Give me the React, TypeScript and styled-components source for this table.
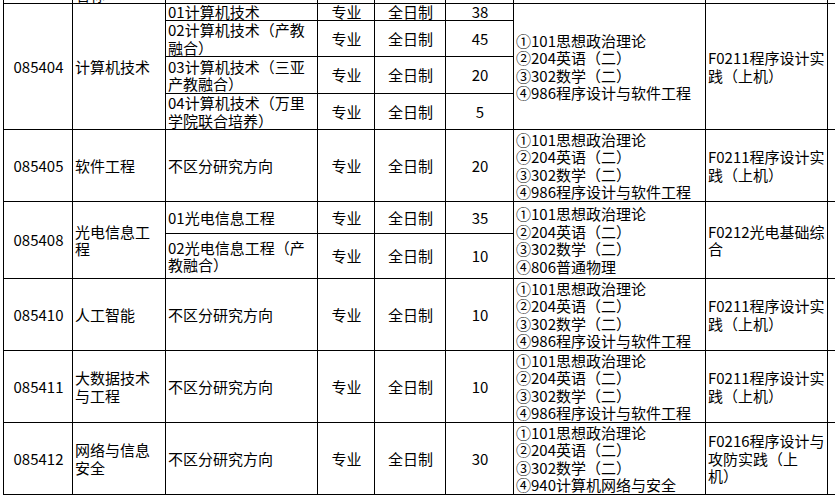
import React from 'react'
import styled, { createGlobalStyle } from 'styled-components'

const GlobalStyle = createGlobalStyle`
  html, body {
    margin: 0;
    padding: 0;
    background: #ffffff;
  }
  body {
    font-family: "Noto Sans CJK SC", "Liberation Sans", sans-serif;
    color: #000;
  }
`

const Viewport = styled.div`
  width: 835px;
  height: 496px;
  overflow: hidden;
  padding-left: 3px;
  box-sizing: border-box;
`

const Sheet = styled.table`
  border-collapse: collapse;
  table-layout: fixed;
  width: 894px;
  margin-top: -33px;
  font-size: 15px;
  line-height: 17.5px;
  text-spacing-trim: space-all;
`

const Row = styled.tr<{ $h: number }>`
  height: ${p => p.$h}px;
`

const Cell = styled.td<{ $align?: 'left' | 'center'; $tight?: boolean }>`
  border: 1px solid #000;
  padding: 0 1px 0 2px;
  vertical-align: middle;
  text-align: ${p => p.$align ?? 'left'};
  line-height: ${p => (p.$tight ? '16px' : '17.5px')};
  overflow: hidden;
  white-space: normal;
`

const Lines = styled.div`
  display: flex;
  flex-direction: column;
`

const widths = [69, 93, 152, 57, 71, 68, 192, 122, 70]

type Direction = { name: string; quota: number; h: number; tight?: boolean }

type Program = {
  code: string
  name: string
  directions: Direction[]
  subjects: string[]
  exam: string
}

const politics = '①101思想政治理论'
const english = '②204英语（二）'
const math = '③302数学（二）'
const software = '④986程序设计与软件工程'
const practice = 'F0211程序设计实践（上机）'

const programs: Program[] = [
  {
    code: '085404',
    name: '计算机技术',
    directions: [
      { name: '01计算机技术', quota: 38, h: 17, tight: true },
      { name: '02计算机技术（产教融合）', quota: 45, h: 36 },
      { name: '03计算机技术（三亚产教融合）', quota: 20, h: 37 },
      { name: '04计算机技术（万里学院联合培养）', quota: 5, h: 35 },
    ],
    subjects: [politics, english, math, software],
    exam: practice,
  },
  {
    code: '085405',
    name: '软件工程',
    directions: [{ name: '不区分研究方向', quota: 20, h: 72 }],
    subjects: [politics, english, math, software],
    exam: practice,
  },
  {
    code: '085408',
    name: '光电信息工程',
    directions: [
      { name: '01光电信息工程', quota: 35, h: 32 },
      { name: '02光电信息工程（产教融合）', quota: 10, h: 45 },
    ],
    subjects: [politics, english, math, '④806普通物理'],
    exam: 'F0212光电基础综合',
  },
  {
    code: '085410',
    name: '人工智能',
    directions: [{ name: '不区分研究方向', quota: 10, h: 72 }],
    subjects: [politics, english, math, software],
    exam: practice,
  },
  {
    code: '085411',
    name: '大数据技术与工程',
    directions: [{ name: '不区分研究方向', quota: 10, h: 72 }],
    subjects: [politics, english, math, software],
    exam: practice,
  },
  {
    code: '085412',
    name: '网络与信息安全',
    directions: [{ name: '不区分研究方向', quota: 30, h: 72 }],
    subjects: [politics, english, math, '④940计算机网络与安全'],
    exam: 'F0216程序设计与攻防实践（上机）',
  },
]

function ProgramRows({ p }: { p: Program }) {
  const span = p.directions.length
  return (
    <>
      {p.directions.map((d, i) => (
        <Row key={d.name} $h={d.h}>
          {i === 0 && (
            <>
              <Cell rowSpan={span} $align="center">{p.code}</Cell>
              <Cell rowSpan={span}>{p.name}</Cell>
            </>
          )}
          <Cell $tight={d.tight}>{d.name}</Cell>
          <Cell $tight={d.tight} $align="center">专业</Cell>
          <Cell $tight={d.tight} $align="center">全日制</Cell>
          <Cell $tight={d.tight} $align="center">{d.quota}</Cell>
          {i === 0 && (
            <>
              <Cell rowSpan={span}>
                <Lines>
                  {p.subjects.map(s => (
                    <span key={s}>{s}</span>
                  ))}
                </Lines>
              </Cell>
              <Cell rowSpan={span}>{p.exam}</Cell>
              <Cell rowSpan={span} />
            </>
          )}
        </Row>
      ))}
    </>
  )
}

export default function App() {
  return (
    <>
      <GlobalStyle />
      <Viewport>
        <Sheet>
          <colgroup>
            {widths.map((w, i) => (
              <col key={i} style={{ width: w }} />
            ))}
          </colgroup>
          <tbody>
            <Row $h={36}>
              <Cell />
              <Cell>学科、专业名称</Cell>
              <Cell />
              <Cell />
              <Cell />
              <Cell />
              <Cell $align="center">初试科目</Cell>
              <Cell />
              <Cell />
            </Row>
            {programs.map(p => (
              <ProgramRows key={p.code} p={p} />
            ))}
          </tbody>
        </Sheet>
      </Viewport>
    </>
  )
}
